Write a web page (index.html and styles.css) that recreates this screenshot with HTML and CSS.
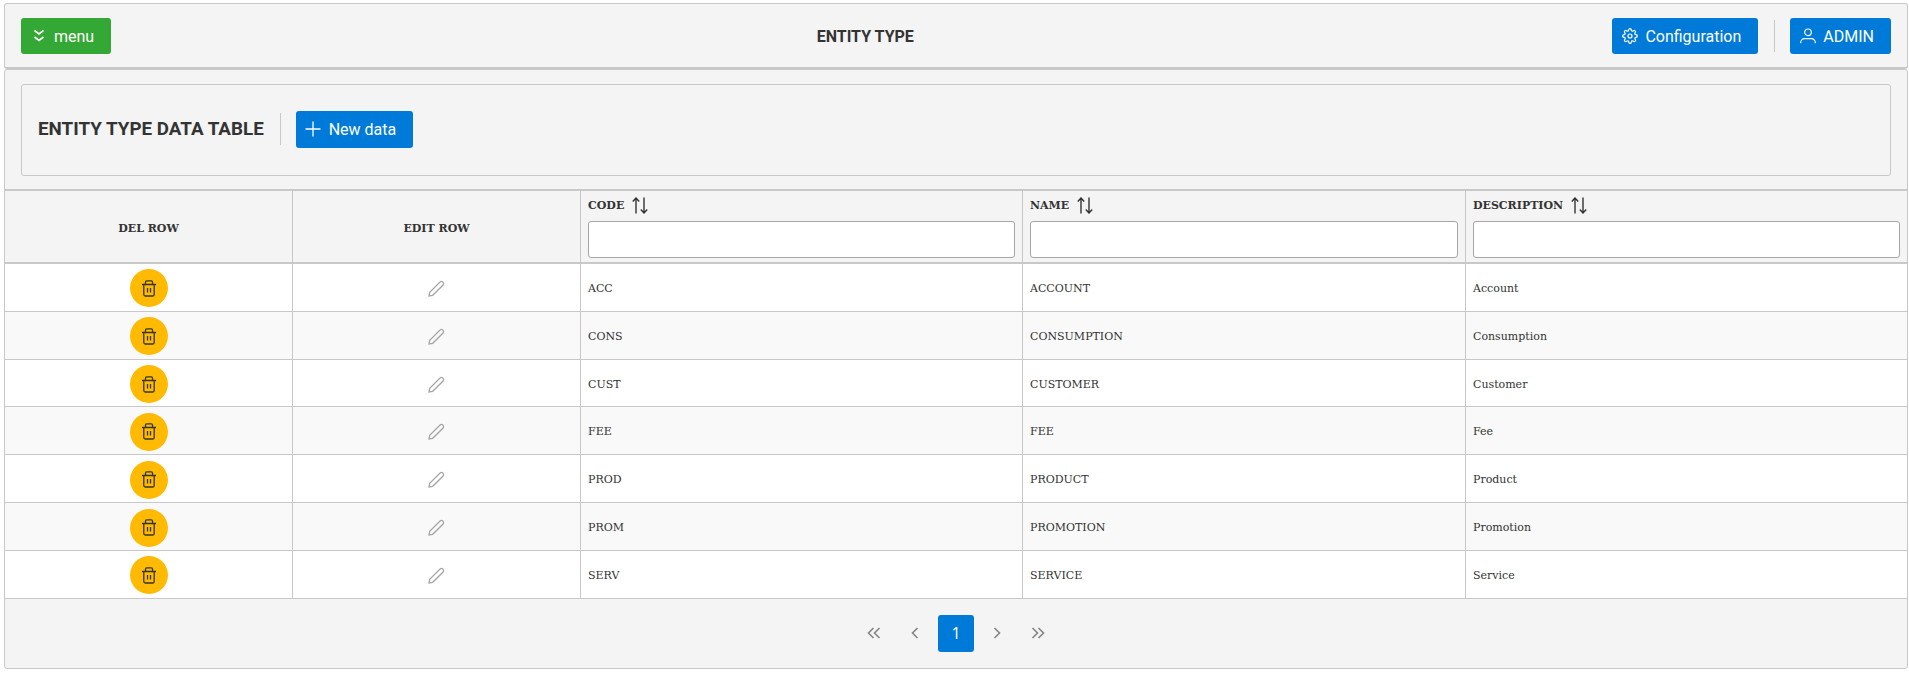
FILE: index.html
```html
<!DOCTYPE html>
<html lang="en">
<head>
  <meta charset="UTF-8">
  <title>Entity Type</title>
  <link rel="stylesheet" href="styles.css">
</head>
<body>
  <svg class="sprites" width="0" height="0">
    <symbol id="trash" viewBox="0 0 16 17"><path d="M1 4.500h14M2.800 4.500v10a1.500 1.500 0 0 0 1.500 1.500h7.400a1.500 1.500 0 0 0 1.500-1.500v-10M4.500 4.500V2a1.200 1.200 0 0 1 1.200-1.200h4.600a1.200 1.200 0 0 1 1.200 1.200v2.500M6.500 8v4.500M9.500 8v4.500"/></symbol>
    <symbol id="pencil" viewBox="0 0 17 17"><path d="M1 16l.7-3.700L12.300 1.800a2.200 2.200 0 0 1 3 3L4.700 15.300z"/></symbol>
    <symbol id="sort" viewBox="0 0 16 17"><path d="M4 16.500V1M.8 4.500L4 1l3.200 3.500M12 .5V16M8.800 12.500L12 16l3.200-3.500"/></symbol>
  </svg>

  <header class="topbar">
    <button class="btn btn-green">
      <svg class="icon" viewBox="0 0 16 16"><path d="M3.500 2.500L8 6l4.500-3.500M3.500 9L8 12.500 12.500 9"/></svg>
      menu
    </button>
    <div class="page-title">ENTITY TYPE</div>
    <div class="topbar-right">
      <button class="btn">
        <svg class="icon icon-gear" viewBox="0 0 24 24"><circle cx="12" cy="12" r="3"/><path d="M19.400 15a1.650 1.650 0 0 0 .33 1.820l.06.06a2 2 0 0 1 0 2.830 2 2 0 0 1-2.830 0l-.06-.06a1.650 1.650 0 0 0-1.820-.33 1.650 1.650 0 0 0-1 1.510V21a2 2 0 0 1-2 2 2 2 0 0 1-2-2v-.09A1.650 1.650 0 0 0 9 19.400a1.650 1.650 0 0 0-1.820.33l-.06.06a2 2 0 0 1-2.830 0 2 2 0 0 1 0-2.830l.06-.06a1.650 1.650 0 0 0 .33-1.820 1.650 1.650 0 0 0-1.510-1H3a2 2 0 0 1-2-2 2 2 0 0 1 2-2h.09A1.650 1.650 0 0 0 4.600 9a1.650 1.650 0 0 0-.33-1.820l-.06-.06a2 2 0 0 1 0-2.830 2 2 0 0 1 2.830 0l.06.06a1.650 1.650 0 0 0 1.820.33H9a1.650 1.650 0 0 0 1-1.510V3a2 2 0 0 1 2-2 2 2 0 0 1 2 2v.09a1.650 1.650 0 0 0 1 1.510 1.650 1.650 0 0 0 1.820-.33l.06-.06a2 2 0 0 1 2.830 0 2 2 0 0 1 0 2.830l-.06.06a1.650 1.650 0 0 0-.33 1.820V9a1.650 1.650 0 0 0 1.510 1H21a2 2 0 0 1 2 2 2 2 0 0 1-2 2h-.09a1.650 1.650 0 0 0-1.510 1z"/></svg>
        Configuration
      </button>
      <span class="divider"></span>
      <button class="btn">
        <svg class="icon" viewBox="0 0 16 16"><circle cx="8" cy="4.300" r="3.300"/><path d="M.7 15.200v-.7a3.800 3.800 0 0 1 3.800-3.800h7a3.800 3.800 0 0 1 3.800 3.800v.7"/></svg>
        ADMIN
      </button>
    </div>
  </header>

  <main class="panel">
    <div class="caption-wrap">
      <div class="caption">
        <span class="caption-title">ENTITY TYPE DATA TABLE</span>
        <span class="divider"></span>
        <button class="btn btn-new">
          <svg class="icon" viewBox="0 0 16 16"><path d="M8 .5v15M.5 8h15"/></svg>
          New data
        </button>
      </div>
    </div>

    <table class="data-table">
      <colgroup>
        <col class="col-del"><col class="col-edit"><col class="col-code"><col class="col-name"><col class="col-desc">
      </colgroup>
      <thead>
        <tr>
          <th class="center">DEL ROW</th>
          <th class="center">EDIT ROW</th>
          <th>
            <div class="th-label">CODE <svg class="sort"><use href="#sort"/></svg></div>
            <input class="filter" type="text">
          </th>
          <th>
            <div class="th-label">NAME <svg class="sort"><use href="#sort"/></svg></div>
            <input class="filter" type="text">
          </th>
          <th>
            <div class="th-label">DESCRIPTION <svg class="sort"><use href="#sort"/></svg></div>
            <input class="filter" type="text">
          </th>
        </tr>
      </thead>
      <tbody>
        <tr>
          <td class="center"><span class="del-btn"><svg><use href="#trash"/></svg></span></td>
          <td class="center"><svg class="edit"><use href="#pencil"/></svg></td>
          <td>ACC</td><td>ACCOUNT</td><td>Account</td>
        </tr>
        <tr>
          <td class="center"><span class="del-btn"><svg><use href="#trash"/></svg></span></td>
          <td class="center"><svg class="edit"><use href="#pencil"/></svg></td>
          <td>CONS</td><td>CONSUMPTION</td><td>Consumption</td>
        </tr>
        <tr>
          <td class="center"><span class="del-btn"><svg><use href="#trash"/></svg></span></td>
          <td class="center"><svg class="edit"><use href="#pencil"/></svg></td>
          <td>CUST</td><td>CUSTOMER</td><td>Customer</td>
        </tr>
        <tr>
          <td class="center"><span class="del-btn"><svg><use href="#trash"/></svg></span></td>
          <td class="center"><svg class="edit"><use href="#pencil"/></svg></td>
          <td>FEE</td><td>FEE</td><td>Fee</td>
        </tr>
        <tr>
          <td class="center"><span class="del-btn"><svg><use href="#trash"/></svg></span></td>
          <td class="center"><svg class="edit"><use href="#pencil"/></svg></td>
          <td>PROD</td><td>PRODUCT</td><td>Product</td>
        </tr>
        <tr>
          <td class="center"><span class="del-btn"><svg><use href="#trash"/></svg></span></td>
          <td class="center"><svg class="edit"><use href="#pencil"/></svg></td>
          <td>PROM</td><td>PROMOTION</td><td>Promotion</td>
        </tr>
        <tr>
          <td class="center"><span class="del-btn"><svg><use href="#trash"/></svg></span></td>
          <td class="center"><svg class="edit"><use href="#pencil"/></svg></td>
          <td>SERV</td><td>SERVICE</td><td>Service</td>
        </tr>
      </tbody>
    </table>

    <nav class="paginator">
      <span class="pg-item"><svg class="pg-icon" viewBox="0 0 14 14"><path d="M6.500 2l-5 5 5 5M12.500 2l-5 5 5 5"/></svg></span>
      <span class="pg-item"><svg class="pg-icon" viewBox="0 0 14 14"><path d="M9.500 2l-5 5 5 5"/></svg></span>
      <span class="pg-item pg-current">1</span>
      <span class="pg-item"><svg class="pg-icon" viewBox="0 0 14 14"><path d="M4.500 2l5 5-5 5"/></svg></span>
      <span class="pg-item"><svg class="pg-icon" viewBox="0 0 14 14"><path d="M1.500 2l5 5-5 5M7.500 2l5 5-5 5"/></svg></span>
    </nav>
  </main>
</body>
</html>
```

FILE: styles.css
```css
* { box-sizing: border-box; }
body { margin: 3px 1px 0 4px; font-family: Roboto, sans-serif; color: #333; background: #fff; }
.sprites { position: absolute; }

.topbar { height: 66px; display: flex; align-items: center; justify-content: space-between; padding: 1px 16px 0; background: #f4f4f4; border: 1px solid #c8c8c8; border-bottom-width: 2px; border-radius: 3px; }
.page-title { font-size: 16px; font-weight: 700; color: #333; margin-left: 7px; }
.topbar-right { display: flex; align-items: center; }

.btn { height: 36px; display: inline-flex; align-items: center; gap: 7px; padding: 0 17px 0 10px; background: #007ad9; color: #fff; border: 0; border-radius: 3px; font-family: Roboto, sans-serif; font-size: 16px; }
.btn-green { background: #34a835; }
.icon { width: 16px; height: 16px; fill: none; stroke: #fff; stroke-width: 1.200; }
.btn-green .icon { stroke-width: 1.600; }
.icon-gear { stroke-width: 1.800; }
.btn-new { height: 37px; padding-left: 9px; gap: 8px; margin-bottom: 2px; }
.btn-new .icon { stroke-width: 1.300; }

.divider { display: inline-block; width: 1px; height: 32px; background: #c8c8c8; margin: 0 15px 0 16px; }

.panel { background: #f4f4f4; border: 1px solid #c8c8c8; border-radius: 3px; height: 600px; }
.caption-wrap { padding: 14px 16px 13px; border-bottom: 2px solid #c8c8c8; }
.caption { height: 92px; display: flex; align-items: center; padding: 0 16px; border: 1px solid #c8c8c8; border-radius: 3px; }
.caption-title { font-size: 18.800px; font-weight: 700; color: #333; margin-bottom: 2px; }
.caption .divider { margin-bottom: 2px; }

.data-table { width: 100%; border-collapse: separate; border-spacing: 0; table-layout: fixed; font-family: "DejaVu Serif", serif; font-size: 11px; color: #333; }
.col-del, .col-edit { width: 288px; }
.col-code { width: 442px; }
.col-name { width: 443px; }
.data-table th, .data-table td { border-right: 1px solid #c8c8c8; text-align: left; }
.data-table th:last-child, .data-table td:last-child { border-right: 0; }
.data-table th { height: 73px; padding: 4px 7px; background: #f4f4f4; font-weight: 700; border-bottom: 2px solid #c8c8c8; }
.data-table td { height: 47.830px; padding: 2px 7px 0; background: #fff; border-bottom: 1px solid #c8c8c8; }
.data-table tbody tr:nth-child(even) td { background: #f9f9f9; }
.data-table .center { text-align: center; }
.data-table th.center { padding: 4px 7px 0; }

.th-label { display: flex; align-items: center; gap: 8px; height: 20px; margin-bottom: 6px; }
.sort { width: 16px; height: 17px; fill: none; stroke: #333; stroke-width: 1.400; }
.filter { display: block; width: 100%; height: 37px; background: #fff; border: 1px solid #a6a6a6; border-radius: 3px; }

.del-btn { display: inline-flex; width: 38px; height: 38px; border-radius: 50%; background: #ffba01; align-items: center; justify-content: center; vertical-align: middle; }
.del-btn svg { width: 16px; height: 17px; fill: none; stroke: #333; stroke-width: 1.300; }
.edit { width: 17px; height: 17px; fill: none; stroke: #a6a6a6; stroke-width: 1.300; vertical-align: middle; }

.paginator { height: 69px; display: flex; align-items: center; justify-content: center; gap: 5px; }
.pg-item { width: 36px; height: 37px; display: flex; align-items: center; justify-content: center; }
.pg-icon { width: 14px; height: 14px; fill: none; stroke: #848484; stroke-width: 1.600; }
.pg-current { background: #007ad9; color: #fff; border-radius: 3px; font-family: "Open Sans", sans-serif; font-size: 16px; }
```
